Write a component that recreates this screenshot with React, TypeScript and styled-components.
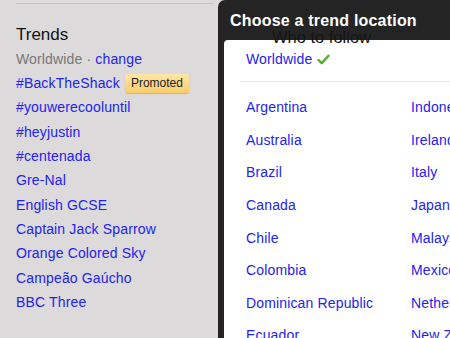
import React from 'react';
import styled, { createGlobalStyle } from 'styled-components';

const GlobalStyle = createGlobalStyle`
    html, body {
        margin: 0;
        padding: 0;
        width: 450px;
        height: 338px;
        overflow: hidden;
        background: #dcdada;
        font-family: 'Liberation Sans', Arial, sans-serif;
    }
`;

const trends = [
    '#youwerecooluntil',
    '#heyjustin',
    '#centenada',
    'Gre-Nal',
    'English GCSE',
    'Captain Jack Sparrow',
    'Orange Colored Sky',
    'Campeão Gaúcho',
    'BBC Three',
];

const countries = [
    ['Argentina', 'Indonesia'],
    ['Australia', 'Ireland'],
    ['Brazil', 'Italy'],
    ['Canada', 'Japan'],
    ['Chile', 'Malaysia'],
    ['Colombia', 'Mexico'],
    ['Dominican Republic', 'Netherlands'],
    ['Ecuador', 'New Zealand'],
];

const Page = styled.div`
    display: flex;
    width: 450px;
    height: 338px;
    overflow: hidden;
`;

const Sidebar = styled.div`
    width: 202px;
    flex-shrink: 0;
    padding: 3px 0 0 16px;
`;

const Rule = styled.div`
    height: 1px;
    width: 198px;
    background: #c4c2c2;
`;

const Title = styled.h2`
    margin: 19px 0 0;
    font-size: 17px;
    font-weight: normal;
    line-height: 24px;
    color: #111;
`;

const Meta = styled.div`
    font-size: 14px;
    line-height: 24px;
    letter-spacing: 0.15px;
    color: #777;
`;

const Link = styled.a`
    color: #2323ee;
    text-decoration: none;
    cursor: pointer;
`;

const TrendList = styled.ul`
    list-style: none;
    margin: 0;
    padding: 0;
`;

const TrendItem = styled.li`
    display: flex;
    align-items: center;
    height: 24.33px;
    font-size: 14px;
    letter-spacing: 0.15px;
    white-space: nowrap;
`;

const Badge = styled.span`
    margin-left: 5px;
    padding: 0 6px;
    height: 19px;
    line-height: 19px;
    font-size: 12px;
    letter-spacing: 0;
    color: #222;
    border-radius: 3px;
    background: linear-gradient(#ffe6a6, #f9cc6a);
    box-shadow: 0 1px 1px rgba(160, 120, 30, 0.35);
`;

const Modal = styled.div`
    position: relative;
    flex: 1;
    display: flex;
    flex-direction: column;
    padding-left: 6px;
    background: #242424;
    border-radius: 7px 0 0 0;
`;

const ModalHeader = styled.div`
    height: 40px;
    flex-shrink: 0;
    padding-left: 6px;
    line-height: 41px;
    font-size: 16px;
    font-weight: bold;
    letter-spacing: 0.2px;
    color: #fff;
    white-space: nowrap;
`;

const Ghost = styled.div`
    position: absolute;
    left: 54px;
    top: 27px;
    font-size: 16.5px;
    line-height: 20px;
    color: #151515;
    white-space: nowrap;
    pointer-events: none;
`;

const Panel = styled.div`
    flex: 1;
    background: #fff;
    border-radius: 4px 0 0 0;
    padding-left: 16px;
`;

const Current = styled.div`
    padding: 7px 0 10px 6px;
    line-height: 24px;
    font-size: 14px;
    letter-spacing: 0.15px;
    border-bottom: 1px solid #e6e6e6;
    display: flex;
    align-items: center;
    gap: 5px;
`;

const CountryGrid = styled.div`
    display: grid;
    grid-template-columns: 165px 165px;
    grid-auto-rows: 32.57px;
    margin-top: 9px;
    padding-left: 6px;
    align-items: center;
    font-size: 14px;
    letter-spacing: 0.15px;
    white-space: nowrap;
`;

const Check = () => (
    <svg width="13" height="11" viewBox="0 0 13 11">
        <path
            d="M1.5 6 L4.8 9.2 L11.5 1.8"
            fill="none"
            stroke="#4cae2c"
            strokeWidth="2.4"
            strokeLinecap="round"
            strokeLinejoin="round"
        />
    </svg>
);

export default function App() {
    return (
        <Page>
            <GlobalStyle />
            <Sidebar>
                <Rule />
                <Title>Trends</Title>
                <Meta>
                    Worldwide · <Link>change</Link>
                </Meta>
                <TrendList>
                    <TrendItem>
                        <Link>#BackTheShack</Link>
                        <Badge>Promoted</Badge>
                    </TrendItem>
                    {trends.map((t) => (
                        <TrendItem key={t}>
                            <Link>{t}</Link>
                        </TrendItem>
                    ))}
                </TrendList>
            </Sidebar>
            <Modal>
                <ModalHeader>Choose a trend location</ModalHeader>
                <Panel>
                    <Current>
                        <Link>Worldwide</Link>
                        <Check />
                    </Current>
                    <CountryGrid>
                        {countries.flat().map((c) => (
                            <Link key={c}>{c}</Link>
                        ))}
                    </CountryGrid>
                </Panel>
                <Ghost>Who to follow</Ghost>
            </Modal>
        </Page>
    );
}
